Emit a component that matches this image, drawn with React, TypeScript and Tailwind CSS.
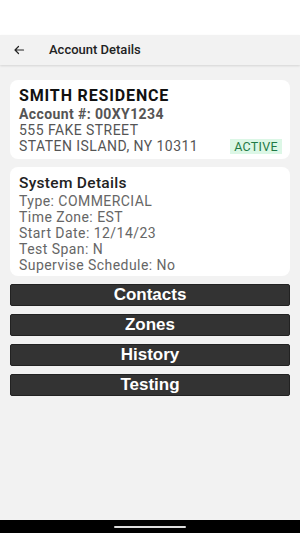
import React from "react";

export default function App() {
  return (
    <div className="w-[300px] h-[533px] flex flex-col bg-[#f2f2f2] overflow-hidden" style={{ fontFamily: "Roboto, 'Liberation Sans', sans-serif" }}>
      <div className="h-[35px] bg-white shrink-0" />
      <div className="h-[30px] shrink-0 bg-[#f2f2f2] flex items-center shadow-[0_1px_2px_rgba(0,0,0,0.12)] relative z-10">
        <svg width="12" height="12" viewBox="0 0 24 24" className="ml-[13px]" fill="none" stroke="#222" strokeWidth="2.4" strokeLinecap="round" strokeLinejoin="round">
          <path d="M21 12H4M11 5l-7 7 7 7" />
        </svg>
        <span className="ml-[24px] text-[13px] font-medium text-[#222]">Account Details</span>
      </div>
      <div className="flex-1 flex flex-col px-[10px] pt-[15px]">
        <div className="bg-white rounded-[8px] px-[9px] pt-[6px] pb-[5px] flex flex-col">
          <div className="text-[16px] font-bold text-[#111] leading-[20px] tracking-[0.85px]">SMITH RESIDENCE</div>
          <div className="text-[14px] font-bold text-[#555] leading-[16px] tracking-[0.4px]">Account #: 00XY1234</div>
          <div className="text-[14px] text-[#555] leading-[16px] tracking-[0.45px]">555 FAKE STREET</div>
          <div className="flex items-center justify-between">
            <div className="text-[14px] text-[#555] leading-[16px] tracking-[0.45px]">STATEN ISLAND, NY 10311</div>
            <div className="bg-[#dcf7e6] text-[#1f7a45] text-[12.5px] leading-[15px] px-[4px] mr-[-1px] tracking-[0.3px]">ACTIVE</div>
          </div>
        </div>
        <div className="bg-white rounded-[8px] px-[9px] pt-[7px] pb-[3px] mt-[8px] flex flex-col">
          <div className="text-[15.5px] font-medium text-[#222] leading-[18px] mb-[1px] tracking-[0.3px]">System Details</div>
          {["Type: COMMERCIAL", "Time Zone: EST", "Start Date: 12/14/23", "Test Span: N", "Supervise Schedule: No"].map((t) => (
            <div key={t} className="text-[14px] text-[#666] leading-[16px] tracking-[0.45px]">{t}</div>
          ))}
        </div>
        <div className="flex flex-col gap-[8px] mt-[8px]">
          {["Contacts", "Zones", "History", "Testing"].map((t) => (
            <div key={t} className="h-[22px] bg-[#333333] border border-[#222] rounded-[2px] flex items-center justify-center text-white text-[17px] font-bold" style={{ fontFamily: "'Liberation Sans', Arial, sans-serif" }}>
              {t}
            </div>
          ))}
        </div>
      </div>
      <div className="h-[13px] bg-black shrink-0 flex items-center justify-center">
        <div className="w-[72px] h-[2px] bg-[#ddd] rounded-full" />
      </div>
    </div>
  );
}
